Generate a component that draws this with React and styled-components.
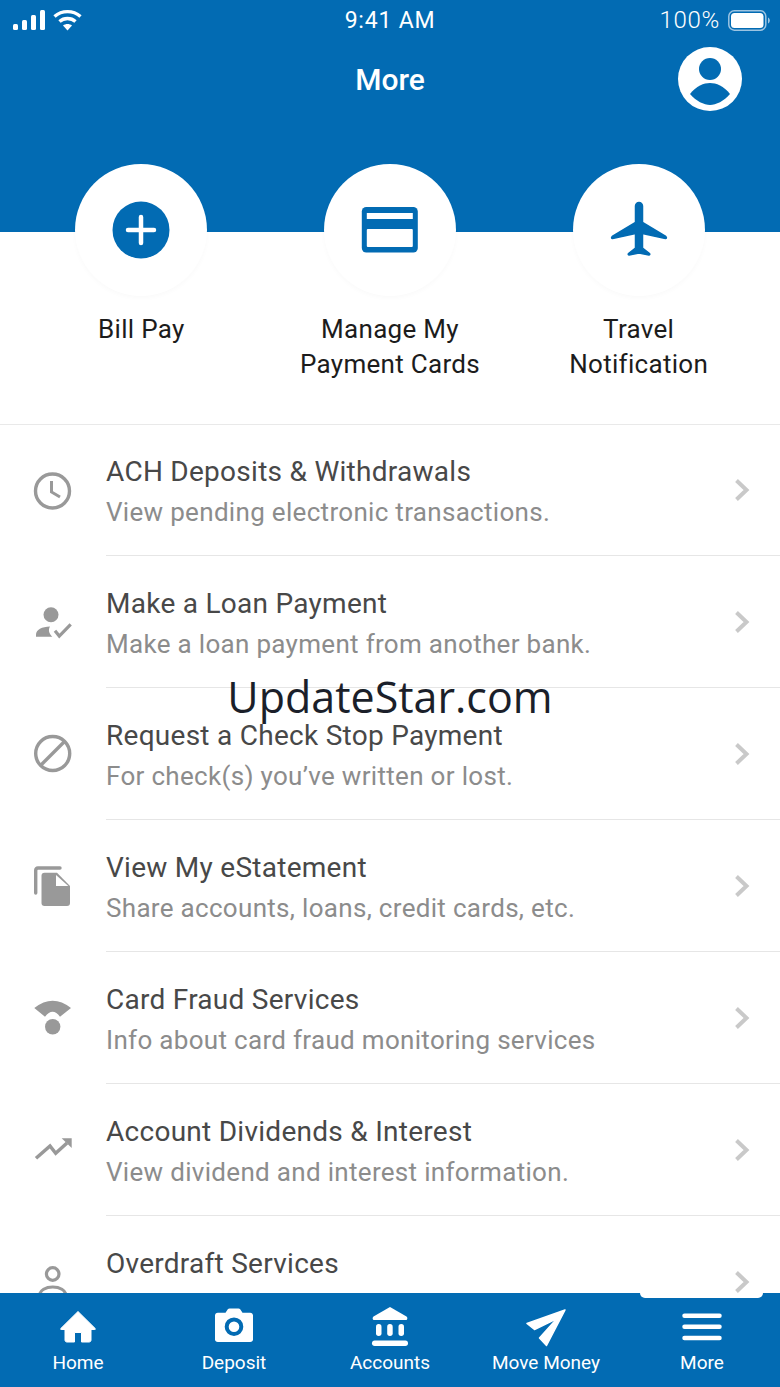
import React from "react";
import styled, { createGlobalStyle } from "styled-components";

const BLUE = "#026bb3";
const GRAY = "#999999";

const GlobalStyle = createGlobalStyle`
  html, body {
    margin: 0;
    padding: 0;
    background: #fff;
  }
  * {
    box-sizing: border-box;
  }
`;

const Screen = styled.div`
  position: relative;
  width: 780px;
  height: 1387px;
  display: flex;
  flex-direction: column;
  overflow: hidden;
  background: #fff;
  font-family: Roboto, "Liberation Sans", sans-serif;
`;

const Header = styled.header`
  height: 232px;
  flex: none;
  background: ${BLUE};
  color: #fff;
`;

const StatusBar = styled.div`
  display: grid;
  grid-template-columns: 1fr auto 1fr;
  align-items: center;
  height: 40px;
  padding: 0 10px 0 13px;
`;

const StatusLeft = styled.div`
  display: flex;
  align-items: center;
  gap: 8px;
`;

const StatusRight = styled.div`
  display: flex;
  align-items: center;
  justify-content: flex-end;
  gap: 8px;
  font-weight: 300;
  font-size: 24px;
  letter-spacing: 0.7px;
`;

const Clock = styled.span`
  font-size: 23px;
  letter-spacing: 0.8px;
  margin-left: -3px;
`;

const TitleRow = styled.div`
  display: grid;
  grid-template-columns: 1fr auto 1fr;
  align-items: center;
  height: 78px;
  padding: 0 38px;
`;

const Title = styled.h1`
  margin: 0;
  font-size: 30px;
  font-weight: 500;
  grid-column: 2;
`;

const Avatar = styled.svg`
  justify-self: end;
  width: 64px;
  height: 64px;
`;

const Actions = styled.section`
  flex: none;
  height: 261px;
  margin-top: -68px;
  padding: 0 17px;
  display: grid;
  grid-template-columns: repeat(3, 1fr);
  border-bottom: 1px solid #e9e9e9;
`;

const Action = styled.div`
  display: flex;
  flex-direction: column;
  align-items: center;
  text-align: center;
`;

const ActionCircle = styled.div`
  width: 132px;
  height: 132px;
  border-radius: 50%;
  background: #fff;
  display: flex;
  align-items: center;
  justify-content: center;
  box-shadow: 0 2px 5px rgba(0, 0, 0, 0.025);
`;

const ActionLabel = styled.div`
  margin-top: 16px;
  font-size: 26px;
  line-height: 35px;
  letter-spacing: 0.3px;
  color: #1c1c1c;
  white-space: pre-line;
`;

const List = styled.div`
  flex: 1;
  min-height: 0;
  overflow: hidden;
`;

const Row = styled.div`
  display: flex;
  align-items: center;
  height: 132px;
  padding-left: 32px;

  &:first-child {
    height: 131px;
  }
`;

const RowIcon = styled.svg`
  flex: none;
  width: 40px;
  height: 40px;
  margin-right: 34px;
`;

const RowBody = styled.div`
  flex: 1;
  height: 100%;
  display: flex;
  align-items: center;
  justify-content: space-between;
  padding-right: 30px;
  border-bottom: 1px solid #e6e6e6;
`;

const RowText = styled.div`
  padding-top: 4px;
`;

const RowTitle = styled.div`
  font-size: 28px;
  line-height: 40px;
  letter-spacing: 0.27px;
  color: #484848;
`;

const RowSub = styled.div`
  font-size: 26px;
  line-height: 40px;
  letter-spacing: 0.31px;
  color: #8c8c8c;
`;

const Chevron = styled.svg`
  flex: none;
  width: 16px;
  height: 24px;
`;

const TabBar = styled.nav`
  flex: none;
  height: 94px;
  background: ${BLUE};
  display: grid;
  grid-template-columns: repeat(5, 1fr);
`;

const Tab = styled.div`
  position: relative;
  display: flex;
  flex-direction: column;
  align-items: center;
  color: #fff;
  font-size: 19px;
  line-height: 24px;
`;

const TabIcon = styled.svg`
  width: 48px;
  height: 48px;
  margin: 7px 0 0;
`;

const TabLabel = styled.span`
  margin-top: 3px;
`;

const ActiveNotch = styled.span`
  position: absolute;
  top: 0;
  left: 16px;
  width: 123px;
  height: 5px;
  background: #fff;
  border-radius: 0 0 7px 7px;
`;

const Watermark = styled.div`
  position: absolute;
  top: 668px;
  left: 0;
  right: 0;
  text-align: center;
  font-family: "Open Sans", sans-serif;
  font-size: 43px;
  line-height: 58px;
  color: #1b1f2a;
`;

const Signal = () => (
  <svg width="32" height="20" viewBox="0 0 32 20" fill="#fff">
    <rect x="0" y="14" width="5" height="6" rx="1.5" />
    <rect x="9" y="10" width="5" height="10" rx="1.5" />
    <rect x="18" y="5" width="5" height="15" rx="1.5" />
    <rect x="27" y="0" width="5" height="20" rx="1.5" />
  </svg>
);

const Wifi = () => (
  <svg width="29" height="22" viewBox="0 0 29 22" fill="none" stroke="#fff" strokeWidth="3.4">
    <path d="M1.5 7.5C9 1 20 1 27.5 7.5" />
    <path d="M6.5 12.5c4.500-4 11.500-4 16 0" />
    <path d="M14.500 21.500l-4.500-5c2.500-2 6.500-2 9 0z" fill="#fff" stroke="none" />
  </svg>
);

const Battery = () => (
  <svg width="42" height="21" viewBox="0 0 42 21" fill="none">
    <rect x="0.8" y="0.8" width="37" height="19.400" rx="5.500" stroke="#9cc4e2" strokeWidth="1.500" />
    <rect x="3" y="3" width="32.500" height="15" rx="3.500" fill="#fff" />
    <path d="M40 7.500c1.200.5 1.800 1.700 1.800 3s-.6 2.500-1.800 3z" fill="#9cc4e2" />
  </svg>
);

const PlusCircle = () => (
  <svg width="64" height="64" viewBox="0 0 64 64">
    <circle cx="32" cy="32" r="28.500" fill={BLUE} />
    <path d="M32 19v26M19 32h26" stroke="#fff" strokeWidth="4.500" strokeLinecap="round" />
  </svg>
);

const CardIcon = () => (
  <svg width="64" height="64" viewBox="0 0 64 64">
    <rect x="3.800" y="9" width="56" height="45.500" rx="4.500" fill={BLUE} />
    <rect x="8.800" y="15" width="46" height="6" fill="#fff" />
    <rect x="8.800" y="31" width="46" height="18" rx="1" fill="#fff" />
  </svg>
);

const PlaneIcon = () => (
  <svg width="64" height="64" viewBox="0 0 64 64">
    <path
      d="M28.500 8a3.500 3.500 0 0 1 7 0V24.500L58.800 38.500c1 .7.8 2-.4 2L35.500 35.500V50l7 5.500c.6.700.3 1.500-.6 1.500L32 55l-9.900 2c-.9 0-1.200-.8-.6-1.500l7-5.500V35.500L5.600 40.500c-1.200 0-1.400-1.300-.4-2L28.500 24.500z"
      fill={BLUE}
      stroke={BLUE}
      strokeWidth="1.500"
      strokeLinejoin="round"
    />
  </svg>
);

const Clock40 = () => (
  <>
    <circle cx="20.500" cy="20" r="17" fill="none" stroke={GRAY} strokeWidth="3.400" />
    <path d="M19.500 10v11l8.500 5" fill="none" stroke={GRAY} strokeWidth="3" />
  </>
);

const PersonCheck = () => (
  <>
    <circle cx="19" cy="12.700" r="7.500" fill={GRAY} />
    <path d="M4 34.700v-2c0-5 6-8 14-8.200 -2 3.500-1 7 2.300 10.200z" fill={GRAY} />
    <path d="M23 28.700l4.300 5.300L38.700 22.300" fill="none" stroke={GRAY} strokeWidth="3.200" />
  </>
);

const Block = () => (
  <>
    <circle cx="20.700" cy="19.500" r="17" fill="none" stroke={GRAY} strokeWidth="3.400" />
    <path d="M32.500 7.500L8.500 31.500" stroke={GRAY} strokeWidth="3.400" />
  </>
);

const Docs = () => (
  <>
    <path d="M3.700 27V4.500Q3.700 2 6 2H28" fill="none" stroke={GRAY} strokeWidth="3.400" strokeLinecap="round" />
    <path d="M12.500 6.700H25L38 20V37q0 3-3 3H12.500q-3 0-3-3V9.700q0-3 3-3z" fill={GRAY} />
    <path d="M24 9v11h12.300z" fill="#fff" />
  </>
);

const Fan = () => (
  <>
    <path d="M2.300 10Q20.700-4.600 39 10L28 18.700Q20.700 8.700 13 18.700z" fill={GRAY} />
    <circle cx="20.700" cy="28.700" r="7.700" fill={GRAY} />
  </>
);

const Trend = () => (
  <>
    <path d="M4 28.300L18 16l5.700 7.300L35 13" fill="none" stroke={GRAY} strokeWidth="3.500" />
    <path d="M29.700 8.300H39.700V18z" fill={GRAY} />
  </>
);

const PersonOutline = () => (
  <>
    <circle cx="20.700" cy="12" r="6.300" fill="none" stroke={GRAY} strokeWidth="3.200" />
    <path d="M7.500 34C7.500 22 34 22 34 34" fill="none" stroke={GRAY} strokeWidth="3.200" />
  </>
);

const HomeGlyph = () => (
  <path
    d="M24 11.500L6.800 28.500c-.4.500-.2 1 .4 1H11V40c0 1.300.8 2 2 2h7.500V32.500h7V42H35c1.200 0 2-.7 2-2V29.500h3.800c.6 0 .8-.5.400-1z"
    fill="#fff"
    stroke="#fff"
    strokeWidth="1"
    strokeLinejoin="round"
  />
);

const CameraGlyph = () => (
  <>
    <path
      d="M5 15.500c0-1.600 1.200-2.800 2.800-2.800h7.700l2.300-3.400c.4-.6 1-.8 1.700-.8h9c.7 0 1.300.2 1.700.8l2.300 3.400h7.700c1.600 0 2.800 1.200 2.800 2.800v24c0 1.600-1.200 2.500-2.800 2.500H7.800c-1.600 0-2.800-.9-2.800-2.500z"
      fill="#fff"
    />
    <circle cx="24" cy="26.700" r="7.300" fill="none" stroke={BLUE} strokeWidth="4" />
  </>
);

const BankGlyph = () => (
  <>
    <path d="M24 7L7.500 16.500c-1.200.8-1.200 3.500.5 3.500h32c1.700 0 1.700-2.700.5-3.500z" fill="#fff" />
    <rect x="10" y="24" width="5.500" height="12" rx="2.700" fill="#fff" />
    <rect x="21.200" y="24" width="5.500" height="12" rx="2.700" fill="#fff" />
    <rect x="32.500" y="24" width="5.500" height="12" rx="2.700" fill="#fff" />
    <rect x="6" y="40.500" width="36" height="5.500" rx="2.700" fill="#fff" />
  </>
);

const SendGlyph = () => (
  <path
    d="M43 10L5 23.500l7.500 6L35 18.500 17.500 38l7 7.500z"
    fill="#fff"
    stroke="#fff"
    strokeWidth="1.500"
    strokeLinejoin="round"
  />
);

const MenuGlyph = () => (
  <path d="M6.500 15.700H41.500M6.500 26.700H41.500M6.500 38H41.500" stroke="#fff" strokeWidth="4.500" strokeLinecap="round" />
);

const rows = [
  { title: "ACH Deposits & Withdrawals", sub: "View pending electronic transactions.", Glyph: Clock40 },
  { title: "Make a Loan Payment", sub: "Make a loan payment from another bank.", Glyph: PersonCheck },
  { title: "Request a Check Stop Payment", sub: "For check(s) you’ve written or lost.", Glyph: Block },
  { title: "View My eStatement", sub: "Share accounts, loans, credit cards, etc.", Glyph: Docs },
  { title: "Card Fraud Services", sub: "Info about card fraud monitoring services", Glyph: Fan },
  { title: "Account Dividends & Interest", sub: "View dividend and interest information.", Glyph: Trend },
  { title: "Overdraft Services", sub: "", Glyph: PersonOutline },
];

const actions = [
  { label: "Bill Pay", Icon: PlusCircle },
  { label: "Manage My\nPayment Cards", Icon: CardIcon },
  { label: "Travel\nNotification", Icon: PlaneIcon },
];

const tabs = [
  { label: "Home", Glyph: HomeGlyph },
  { label: "Deposit", Glyph: CameraGlyph },
  { label: "Accounts", Glyph: BankGlyph },
  { label: "Move Money", Glyph: SendGlyph },
  { label: "More", Glyph: MenuGlyph, active: true },
];

const App = () => {
  return (
    <Screen>
      <GlobalStyle />
      <Header>
        <StatusBar>
          <StatusLeft>
            <Signal />
            <Wifi />
          </StatusLeft>
          <Clock>9:41 AM</Clock>
          <StatusRight>
            <span>100%</span>
            <Battery />
          </StatusRight>
        </StatusBar>
        <TitleRow>
          <Title>More</Title>
          <Avatar viewBox="0 0 64 64">
            <circle cx="32" cy="32" r="32" fill="#fff" />
            <circle cx="32" cy="22" r="11" fill={BLUE} />
            <path d="M12 47C18 39 26 36 32 36S46 39 52 47C46 54 38 58 32 58S18 54 12 47Z" fill={BLUE} />
          </Avatar>
        </TitleRow>
      </Header>
      <Actions>
        {actions.map(({ label, Icon }) => (
          <Action key={label}>
            <ActionCircle>
              <Icon />
            </ActionCircle>
            <ActionLabel>{label}</ActionLabel>
          </Action>
        ))}
      </Actions>
      <List>
        {rows.map(({ title, sub, Glyph }) => (
          <Row key={title}>
            <RowIcon viewBox="0 0 40 40" overflow="visible">
              <Glyph />
            </RowIcon>
            <RowBody>
              <RowText>
                <RowTitle>{title}</RowTitle>
                <RowSub>{sub || "\u00a0"}</RowSub>
              </RowText>
              <Chevron viewBox="0 0 16 24">
                <path d="M2.500 2.500L12.500 12 2.500 21.500" fill="none" stroke="#c9c9c9" strokeWidth="4" />
              </Chevron>
            </RowBody>
          </Row>
        ))}
      </List>
      <TabBar>
        {tabs.map(({ label, Glyph, active }) => (
          <Tab key={label}>
            {active && <ActiveNotch />}
            <TabIcon viewBox="0 0 48 48">
              <Glyph />
            </TabIcon>
            <TabLabel>{label}</TabLabel>
          </Tab>
        ))}
      </TabBar>
      <Watermark>UpdateStar.com</Watermark>
    </Screen>
  );
};

export default App;
